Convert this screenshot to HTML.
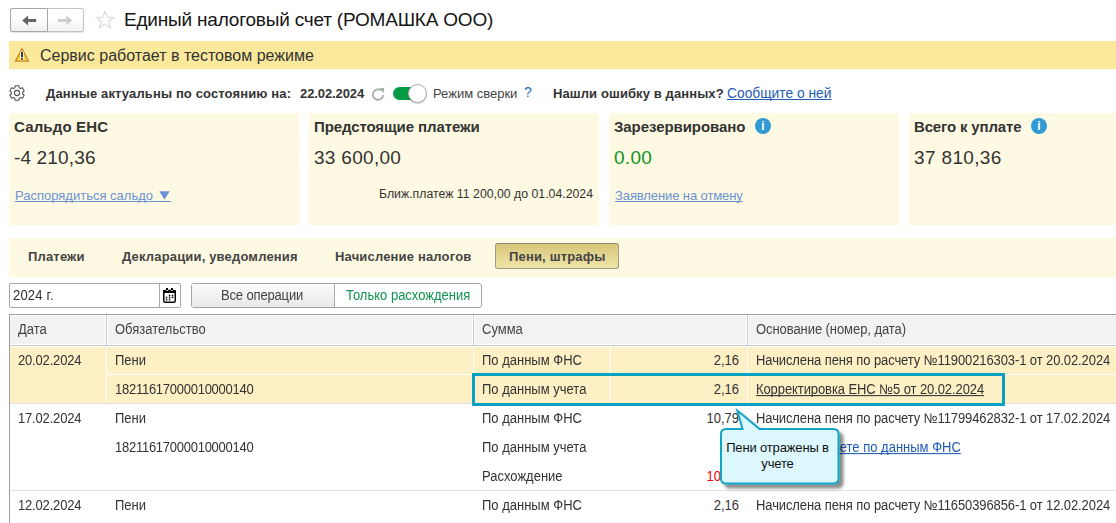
<!DOCTYPE html>
<html><head><meta charset="utf-8">
<style>
*{box-sizing:border-box;margin:0;padding:0}
html,body{width:1116px;height:523px;overflow:hidden;background:#fff}
body{position:relative;font-family:"Liberation Sans",sans-serif;font-size:13px;color:#333}
.a{position:absolute;white-space:nowrap}
.t{position:absolute;white-space:nowrap;line-height:15px;text-decoration-skip-ink:none}
.b{font-weight:bold;letter-spacing:0.17px}
.s{transform:scaleY(1.07);transform-origin:0 12px}
.sr{transform:translateX(-100%) scaleY(1.07);transform-origin:100% 12px}
</style></head><body>

<!-- nav buttons -->
<div class="a" style="left:10px;top:8px;width:74px;height:24px;border:1px solid #c4c4c4;border-radius:2px;background:linear-gradient(#fff 40%,#f2f2f2);box-shadow:0 1px 1px rgba(0,0,0,.1)"></div>
<div class="a" style="left:10px;top:8px;width:38px;height:24px;border:1px solid #a8a8a8;border-radius:2px 0 0 2px;background:linear-gradient(#fff 40%,#efefef)"></div>
<svg class="a" style="left:21px;top:14px" width="16" height="13" viewBox="0 0 16 13"><path d="M1.2 6.5 L7.1 1.4 L7.1 4.9 L15.2 4.9 L15.2 8.1 L7.1 8.1 L7.1 11.6 Z" fill="#666"/></svg>
<svg class="a" style="left:57px;top:14px" width="16" height="13" viewBox="0 0 16 13"><path d="M15.2 6.5 L9.3 1.4 L9.3 4.9 L0.9 4.9 L0.9 8.1 L9.3 8.1 L9.3 11.6 Z" fill="#cdcdcd"/></svg>
<svg class="a" style="left:95px;top:10px" width="20" height="20" viewBox="0 0 20 20"><path d="M10 1.5 L12.4 7.2 L18.5 7.6 L13.8 11.6 L15.3 17.6 L10 14.3 L4.7 17.6 L6.2 11.6 L1.5 7.6 L7.6 7.2 Z" fill="none" stroke="#dedede" stroke-width="1.3"/></svg>
<div class="t" style="left:124px;top:9px;font-size:19px;line-height:21px;color:#151515;letter-spacing:-0.2px">Единый налоговый счет (РОМАШКА ООО)</div>

<!-- warning bar -->
<div class="a" style="left:9px;top:41px;width:1107px;height:28px;background:#fbe99b"></div>
<svg class="a" style="left:14px;top:47px" width="16" height="16" viewBox="0 0 16 16"><path d="M8 1.6 L14.6 14.2 L1.4 14.2 Z" fill="#f6d73c" stroke="#c8862e" stroke-width="1.3" stroke-linejoin="round"/><rect x="6.2" y="4.6" width="3.6" height="8.6" rx="1" fill="#fdf6d8"/><rect x="7" y="5" width="2" height="5.3" fill="#3a3a48"/><rect x="7" y="11.2" width="2" height="1.7" fill="#3a3a48"/></svg>
<div class="t" style="left:40px;top:47px;font-size:16px;line-height:18px;color:#333">Сервис работает в тестовом режиме</div>

<!-- status row -->
<svg class="a" style="left:9px;top:85px" width="16" height="16" viewBox="0 0 16 16"><path d="M5.80 2.74 L6.20 0.72 L9.80 0.72 L10.20 2.74 L10.42 2.84 L10.64 2.95 L10.85 3.06 L11.06 3.19 L11.26 3.32 L11.45 3.47 L13.41 2.80 L15.21 5.92 L13.65 7.28 L13.68 7.52 L13.69 7.76 L13.70 8.00 L13.69 8.24 L13.68 8.48 L13.65 8.72 L15.21 10.08 L13.41 13.20 L11.45 12.53 L11.26 12.68 L11.06 12.81 L10.85 12.94 L10.64 13.05 L10.42 13.16 L10.20 13.26 L9.80 15.28 L6.20 15.28 L5.80 13.26 L5.58 13.16 L5.36 13.05 L5.15 12.94 L4.94 12.81 L4.74 12.68 L4.55 12.53 L2.59 13.20 L0.79 10.08 L2.35 8.72 L2.32 8.48 L2.31 8.24 L2.30 8.00 L2.31 7.76 L2.32 7.52 L2.35 7.28 L0.79 5.92 L2.59 2.80 L4.55 3.47 L4.74 3.32 L4.94 3.19 L5.15 3.06 L5.36 2.95 L5.58 2.84 Z" fill="none" stroke="#555" stroke-width="1.1" stroke-linejoin="round"/><circle cx="8" cy="8" r="2.6" fill="none" stroke="#555" stroke-width="1.1"/></svg>
<div class="t b" style="left:46px;top:86px;letter-spacing:0.13px">Данные актуальны по состоянию на:</div>
<div class="t b" style="left:300px;top:86px;letter-spacing:-0.1px">22.02.2024</div>
<svg class="a" style="left:371px;top:87px" width="15" height="15" viewBox="0 0 15 15"><path d="M12.2 8.2 A5.2 5.2 0 1 1 9.8 3.2" fill="none" stroke="#a2aea2" stroke-width="1.7"/><path d="M8.2 1.2 L13.2 0.9 L12.6 6 Z" fill="#a2aea2"/></svg>
<div class="a" style="left:393px;top:87px;width:30px;height:13px;border-radius:7px;background:#029a45"></div>
<div class="a" style="left:408px;top:84px;width:19px;height:19px;border-radius:50%;background:#fff;border:1px solid #aaa;box-shadow:0 1px 1px rgba(0,0,0,.2)"></div>
<div class="t" style="left:433px;top:86px;color:#444">Режим сверки</div>
<div class="t" style="left:524px;top:85px;font-size:14px;color:#1f70c4">?</div>
<div class="t b" style="left:553px;top:86px;letter-spacing:0.1px">Нашли ошибку в данных?</div>
<div class="t" style="left:727px;top:86px;font-size:13.8px;color:#1f5bb5;text-decoration:underline;text-decoration-skip-ink:none">Сообщите о ней</div>

<!-- cards -->
<div class="a" style="left:9px;top:113px;width:290px;height:112px;background:#fef9e2"></div>
<div class="a" style="left:309px;top:113px;width:290px;height:112px;background:#fef9e2"></div>
<div class="a" style="left:609px;top:113px;width:290px;height:112px;background:#fef9e2"></div>
<div class="a" style="left:909px;top:113px;width:207px;height:112px;background:#fef9e2"></div>

<div class="t b" style="left:14px;top:118px;font-size:15px;line-height:17px;letter-spacing:0.15px">Сальдо ЕНС</div>
<div class="t" style="left:14px;top:147px;font-size:19px;line-height:21px;letter-spacing:0.15px">-4 210,36</div>
<div class="t" style="left:15px;top:188px;color:#6b93d3;text-decoration:underline;text-decoration-skip-ink:none">Распорядиться сальдо&nbsp;&nbsp;&nbsp;&nbsp;&nbsp;</div>
<svg class="a" style="left:159px;top:191px" width="11" height="9" viewBox="0 0 11 9"><path d="M0.3 0.3 L10.7 0.3 L5.5 8.7 Z" fill="#6b93d3"/></svg>

<div class="t b" style="left:314px;top:118px;font-size:15px;line-height:17px;letter-spacing:-0.1px">Предстоящие платежи</div>
<div class="t" style="left:314px;top:147px;font-size:19px;line-height:21px;letter-spacing:0.3px">33 600,00</div>
<div class="t" style="left:379px;top:187px;font-size:12.3px">Ближ.платеж 11 200,00 до 01.04.2024</div>

<div class="t b" style="left:614px;top:118px;font-size:15px;line-height:17px;letter-spacing:-0.07px">Зарезервировано</div>
<div class="a" style="left:755px;top:118px;width:16px;height:16px;border-radius:50%;background:#319ad4;color:#fff;font:bold 12px/16px 'Liberation Sans';text-align:center">i</div>
<div class="t" style="left:614px;top:147px;font-size:19px;line-height:21px;color:#0c9424;letter-spacing:0.3px">0.00</div>
<div class="t" style="left:615px;top:188px;color:#6b93d3;text-decoration:underline;text-decoration-skip-ink:none;letter-spacing:-0.1px">Заявление на отмену</div>

<div class="t b" style="left:914px;top:118px;font-size:15px;line-height:17px;letter-spacing:-0.15px">Всего к уплате</div>
<div class="a" style="left:1031px;top:118px;width:16px;height:16px;border-radius:50%;background:#319ad4;color:#fff;font:bold 12px/16px 'Liberation Sans';text-align:center">i</div>
<div class="t" style="left:914px;top:147px;font-size:19px;line-height:21px;letter-spacing:0.35px">37 810,36</div>

<!-- tabs -->
<div class="a" style="left:9px;top:238px;width:1107px;height:39px;background:#fef9e2"></div>
<div class="t b" style="left:28px;top:249px;color:#444">Платежи</div>
<div class="t b" style="left:122px;top:249px;color:#444">Декларации, уведомления</div>
<div class="t b" style="left:335px;top:249px;color:#444">Начисление налогов</div>
<div class="a" style="left:495px;top:243px;width:124px;height:26px;border:1px solid #a09a80;border-top-color:#8a8470;border-radius:3px;background:linear-gradient(#d8c67a,#efe4a8)"></div>
<div class="t b" style="left:509px;top:249px;color:#444">Пени, штрафы</div>

<!-- filters -->
<div class="a" style="left:9px;top:283px;width:172px;height:25px;border:1px solid #a8a8a8;border-radius:2px;background:#fff"></div>
<div class="a" style="left:159px;top:283px;width:1px;height:25px;background:#a8a8a8"></div>
<div class="t s" style="left:13px;top:288px;color:#333;letter-spacing:0.2px">2024 г.</div>
<svg class="a" style="left:163px;top:288px" width="13" height="15" viewBox="0 0 13 15"><rect x="0.75" y="2.6" width="11.5" height="11.65" rx="1.6" fill="#fff" stroke="#000" stroke-width="1.5"/><rect x="0" y="1.9" width="13" height="3.2" rx="1.2" fill="#000"/><rect x="3" y="0" width="2" height="2" fill="#000"/><rect x="8" y="0" width="2" height="2" fill="#000"/><rect x="3" y="2.3" width="2" height="0.7" fill="#fff"/><rect x="8" y="2.3" width="2" height="0.7" fill="#fff"/><g fill="#000"><rect x="5.8" y="6.7" width="1.5" height="1.5"/><rect x="8.8" y="6.7" width="1.5" height="1.5"/><rect x="2.8" y="8.7" width="1.5" height="1.5"/><rect x="5.8" y="8.7" width="1.5" height="1.5"/><rect x="8.8" y="8.7" width="1.5" height="1.5"/><rect x="2.8" y="10.8" width="1.5" height="1.5"/><rect x="5.8" y="10.8" width="1.5" height="1.5"/></g></svg>

<div class="a" style="left:191px;top:283px;width:291px;height:25px;border:1px solid #a4a4a4;border-radius:3px;background:#fff"></div>
<div class="a" style="left:192px;top:284px;width:142px;height:23px;background:linear-gradient(#fbfbfb,#e8e8e8)"></div>
<div class="a" style="left:334px;top:283px;width:1px;height:25px;background:#a8a8a8"></div>
<div class="t s" style="left:221px;top:288px;color:#444;letter-spacing:-0.15px">Все операции</div>
<div class="t s" style="left:346px;top:288px;color:#0f9350">Только расхождения</div>

<!-- table -->
<div class="a" style="left:9px;top:314px;width:1107px;height:209px;border-left:1px solid #a0a0a0;border-top:1px solid #a0a0a0"></div>
<div class="a" style="left:10px;top:316px;width:1106px;height:28px;background:#f2f2f2"></div>
<div class="a" style="left:10px;top:345px;width:1106px;height:1px;background:#c8c8c8"></div>
<div class="a" style="left:105px;top:316px;width:3px;height:28px;background:#fff"></div>
<div class="a" style="left:106px;top:315px;width:1px;height:30px;background:#cbcbcb"></div>
<div class="a" style="left:472px;top:316px;width:3px;height:28px;background:#fff"></div>
<div class="a" style="left:473px;top:315px;width:1px;height:30px;background:#cbcbcb"></div>
<div class="a" style="left:746px;top:316px;width:3px;height:28px;background:#fff"></div>
<div class="a" style="left:747px;top:315px;width:1px;height:30px;background:#cbcbcb"></div>
<div class="t s" style="left:18px;top:322px;color:#444">Дата</div>
<div class="t s" style="left:115px;top:322px;color:#444">Обязательство</div>
<div class="t s" style="left:482px;top:322px;color:#444">Сумма</div>
<div class="t s" style="left:756px;top:322px;color:#444;letter-spacing:-0.07px">Основание (номер, дата)</div>

<!-- group1 selected -->
<div class="a" style="left:10px;top:347px;width:1106px;height:56px;background:#fdf0c4"></div>
<div class="a" style="left:106px;top:347px;width:1px;height:56px;background:#fff"></div>
<div class="a" style="left:473px;top:347px;width:1px;height:56px;background:#fff"></div>
<div class="a" style="left:610px;top:347px;width:1px;height:56px;background:#fff"></div>
<div class="a" style="left:747px;top:347px;width:1px;height:56px;background:#fff"></div>
<div class="a" style="left:107px;top:374px;width:1009px;height:1px;background:#fff"></div>
<div class="a" style="left:10px;top:403px;width:1106px;height:1px;background:#e0e0e0"></div>

<div class="t s" style="left:18px;top:353px;letter-spacing:-0.17px">20.02.2024</div>
<div class="t s" style="left:115px;top:353px">Пени</div>
<div class="t s" style="left:482px;top:353px">По данным ФНС</div>
<div class="t sr" style="left:739px;top:353px">2,16</div>
<div class="t s" style="left:756px;top:353px;letter-spacing:-0.1px">Начислена пеня по расчету №11900216303-1 от 20.02.2024</div>
<div class="t s" style="left:115px;top:382px;letter-spacing:-0.26px">18211617000010000140</div>
<div class="t s" style="left:482px;top:382px">По данным учета</div>
<div class="t sr" style="left:739px;top:382px">2,16</div>
<div class="t s" style="left:756px;top:382px;text-decoration:underline;letter-spacing:-0.09px">Корректировка ЕНС №5 от 20.02.2024</div>

<!-- group2 -->
<div class="t s" style="left:18px;top:411px;letter-spacing:-0.17px">17.02.2024</div>
<div class="t s" style="left:115px;top:411px">Пени</div>
<div class="t s" style="left:482px;top:411px">По данным ФНС</div>
<div class="t sr" style="left:739px;top:411px">10,79</div>
<div class="t s" style="left:756px;top:411px;letter-spacing:-0.1px">Начислена пеня по расчету №11799462832-1 от 17.02.2024</div>
<div class="t s" style="left:115px;top:440px;letter-spacing:-0.26px">18211617000010000140</div>
<div class="t s" style="left:482px;top:440px">По данным учета</div>
<div class="t s" style="left:756px;top:440px;color:#1f5bb5;text-decoration:underline">Отразить в учете по данным ФНС</div>
<div class="t s" style="left:482px;top:469px">Расхождение</div>
<div class="t sr" style="left:739px;top:469px;color:#e00">10,79</div>
<div class="a" style="left:10px;top:490px;width:1106px;height:1px;background:#e0e0e0"></div>

<!-- group3 -->
<div class="t s" style="left:18px;top:498px;letter-spacing:-0.17px">12.02.2024</div>
<div class="t s" style="left:115px;top:498px">Пени</div>
<div class="t s" style="left:482px;top:498px">По данным ФНС</div>
<div class="t sr" style="left:739px;top:498px">2,16</div>
<div class="t s" style="left:756px;top:498px;letter-spacing:-0.1px">Начислена пеня по расчету №11650396856-1 от 12.02.2024</div>

<!-- highlight box -->
<div class="a" style="left:472px;top:373px;width:533px;height:33px;border:3px solid #0aa0c4"></div>

<!-- callout -->
<svg class="a" style="left:714px;top:404px" width="136" height="92" viewBox="0 0 136 92">
<defs><filter id="sh" x="-20%" y="-20%" width="150%" height="150%"><feDropShadow dx="4" dy="4" stdDeviation="1.8" flood-color="#000" flood-opacity="0.45"/></filter></defs>
<path d="M12 25 L28.5 25 L23.3 6.5 L45.5 25 L119.5 25 Q124.5 25 124.5 30 L124.5 74.5 Q124.5 79.5 119.5 79.5 L12 79.5 Q7 79.5 7 74.5 L7 30 Q7 25 12 25 Z" fill="#dcf7fd" stroke="#12a4c6" stroke-width="2" stroke-miterlimit="10" filter="url(#sh)"/>
</svg>
<div class="a" style="left:719px;top:440px;width:117px;text-align:center;white-space:normal;line-height:16px;color:#111;letter-spacing:-0.15px">Пени отражены в учете</div>

</body></html>
